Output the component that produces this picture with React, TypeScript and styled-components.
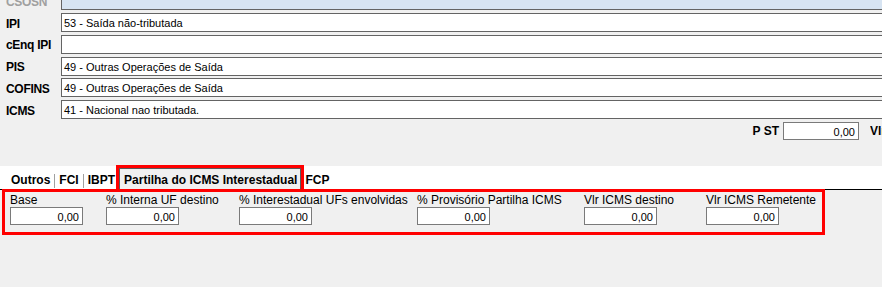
import React from "react";
import styled, { createGlobalStyle } from "styled-components";

const GlobalStyle = createGlobalStyle`
  html, body {
    margin: 0;
    padding: 0;
    background: #f0f0f0;
    overflow: hidden;
  }
  body {
    font-family: "Liberation Sans", Arial, sans-serif;
    color: #000;
  }
`;

const Page = styled.div`
  height: 287px;
  overflow: hidden;
`;

// --- bloco de tributos (lista de códigos) ---
const FieldList = styled.div`
  display: flex;
  flex-direction: column;
  gap: 2.75px;
  margin-top: -8.75px;
  margin-right: -6px;
`;

const FieldRow = styled.div`
  display: grid;
  grid-template-columns: 61px 1fr;
  height: 19px;
`;

const SideLabel = styled.span<{ $disabled?: boolean }>`
  align-self: center;
  padding: 2px 0 0 6px;
  font-size: 12px;
  font-weight: bold;
  letter-spacing: -0.3px;
  white-space: nowrap;
  color: ${(p) => (p.$disabled ? "#a0a0a0" : "#000")};
`;

const CodeBox = styled.div<{ $disabled?: boolean }>`
  box-sizing: border-box;
  height: 19px;
  border: 1px solid #646464;
  background: ${(p) => (p.$disabled ? "#d7e4f2" : "#ffffff")};
  padding: 1px 0 0 2px;
  font-size: 11px;
  line-height: 16px;
  white-space: nowrap;
`;

// --- linha P ST ---
const PstRow = styled.div`
  display: flex;
  justify-content: flex-end;
  align-items: center;
  gap: 4px;
  margin-top: 3px;
  height: 18px;
`;

const BoldLabel = styled.span`
  font-size: 12px;
  font-weight: bold;
  white-space: nowrap;
`;

const CutLabel = styled(BoldLabel)`
  width: 12px;
  overflow: hidden;
  margin-left: 7px;
`;

const NumberBox = styled.div<{ $width: number }>`
  box-sizing: border-box;
  width: ${(p) => p.$width}px;
  height: 18px;
  border: 1px solid #7a7a7a;
  background: #fff;
  padding: 2px 3px 0 0;
  text-align: right;
  font-size: 11px;
  line-height: 14px;
`;

// --- abas ---
const TabStrip = styled.div`
  display: flex;
  align-items: flex-end;
  height: 23px;
  margin-top: 26px;
  padding-left: 7px;
  background: #fff;
  border-bottom: 1px solid #000;
`;

const Tab = styled.div<{ $active?: boolean }>`
  position: relative;
  box-sizing: border-box;
  height: 21px;
  padding: 4px ${(p) => (p.$active ? "3px 0 4px" : "3px 0")};
  border: 1px solid ${(p) => (p.$active ? "#5a5a5a" : "transparent")};
  border-bottom: none;
  background: ${(p) => (p.$active ? "#f0f0f0" : "transparent")};
  font-size: 12px;
  font-weight: bold;
  line-height: 14px;
  white-space: nowrap;

  ${(p) =>
    p.$active &&
    `
    &::after {
      content: "";
      position: absolute;
      top: -4px;
      left: -4px;
      right: -4px;
      bottom: -1px;
      border: 3px solid #ff0000;
      border-bottom: none;
    }
  `}
`;

const TabSeparator = styled.span`
  width: 1px;
  height: 14px;
  margin-bottom: 1px;
  background: #a0a0a0;
`;

// --- painel da partilha ---
const Panel = styled.div`
  box-sizing: border-box;
  width: 823px;
  height: 46px;
  margin: -1px 0 0 2px;
  border: 3px solid #ff0000;
  padding: 1px 0 0 5px;
  display: grid;
  grid-template-columns: 96px 133px 178px 167px 122px auto;
`;

const PanelField = styled.div`
  display: flex;
  flex-direction: column;
`;

const FieldLabel = styled.span`
  font-size: 12px;
  line-height: 14px;
  white-space: nowrap;
`;

const codes = [
  { label: "CSOSN", value: "", disabled: true },
  { label: "IPI", value: "53 - Saída não-tributada" },
  { label: "cEnq IPI", value: "" },
  { label: "PIS", value: "49 - Outras Operações de Saída" },
  { label: "COFINS", value: "49 - Outras Operações de Saída" },
  { label: "ICMS", value: "41 - Nacional nao tributada." },
];

const partilha = [
  "Base",
  "% Interna UF destino",
  "% Interestadual UFs envolvidas",
  "% Provisório Partilha ICMS",
  "Vlr ICMS destino",
  "Vlr ICMS Remetente",
];

function App() {
  return (
    <Page>
      <GlobalStyle />

      <FieldList>
        {codes.map((c) => (
          <FieldRow key={c.label}>
            <SideLabel $disabled={c.disabled}>{c.label}</SideLabel>
            <CodeBox $disabled={c.disabled}>{c.value}</CodeBox>
          </FieldRow>
        ))}
      </FieldList>

      <PstRow>
        <BoldLabel>P ST</BoldLabel>
        <NumberBox $width={76}>0,00</NumberBox>
        <CutLabel>Vlr ST</CutLabel>
      </PstRow>

      <TabStrip>
        <Tab>Outros</Tab>
        <TabSeparator />
        <Tab>FCI</Tab>
        <TabSeparator />
        <Tab>IBPT</Tab>
        <Tab $active>Partilha do ICMS Interestadual</Tab>
        <Tab>FCP</Tab>
      </TabStrip>

      <Panel>
        {partilha.map((label) => (
          <PanelField key={label}>
            <FieldLabel>{label}</FieldLabel>
            <NumberBox $width={73}>0,00</NumberBox>
          </PanelField>
        ))}
      </Panel>
    </Page>
  );
}

export default App;
